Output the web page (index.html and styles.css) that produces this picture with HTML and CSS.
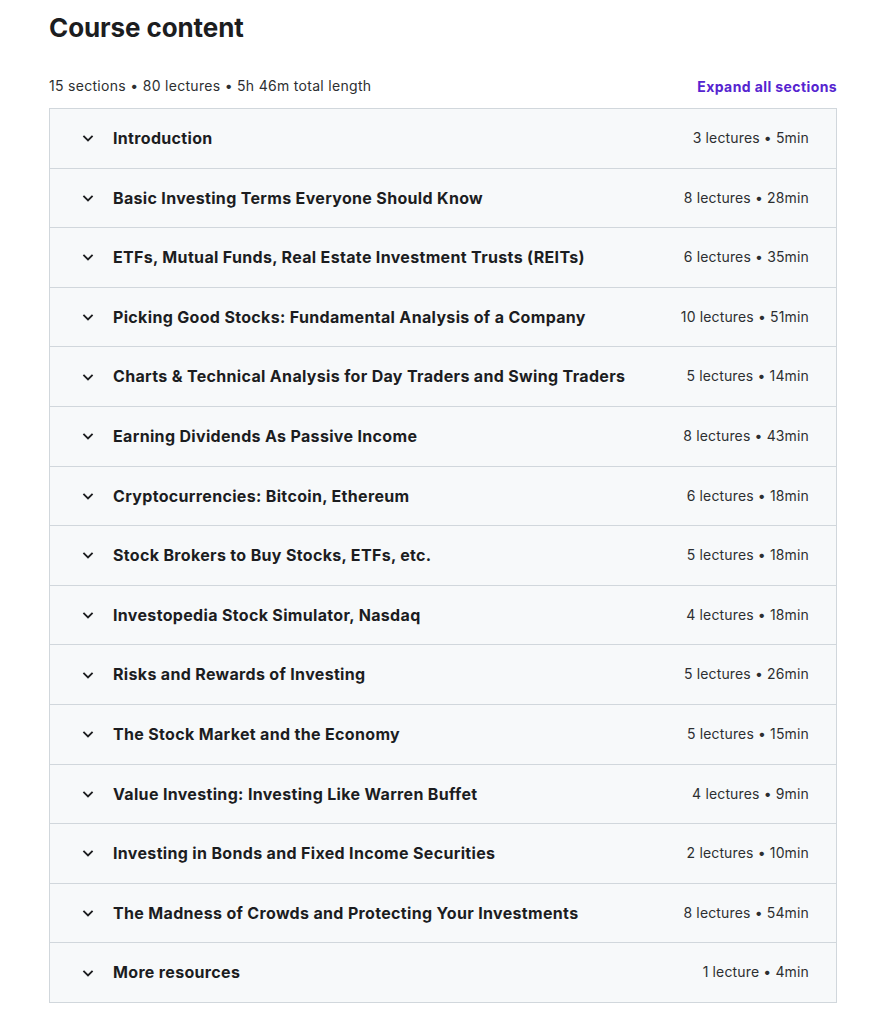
FILE: index.html
```html
<!DOCTYPE html>
<html lang="en">
<head>
    <meta charset="UTF-8">
    <meta name="viewport" content="width=device-width, initial-scale=1.0">
    <title>Course content</title>
    <link rel="stylesheet" href="styles.css">
</head>
<body>
    <div class="curriculum">
        <h2 class="titulo">Course content</h2>

        <div class="resumen">
            <span>15 sections • 80 lectures • 5h 46m total length</span>
            <button class="expandir">Expand all sections</button>
        </div>

        <div class="secciones">
            <div class="seccion">
                <span class="chevron"><svg viewBox="0 0 24 24"><path d="M6.5 9.5l5.5 5.5 5.5-5.5"/></svg></span>
                <span class="nombre">Introduction</span>
                <span class="datos">3 lectures • 5min</span>
            </div>
            <div class="seccion">
                <span class="chevron"><svg viewBox="0 0 24 24"><path d="M6.5 9.5l5.5 5.5 5.5-5.5"/></svg></span>
                <span class="nombre">Basic Investing Terms Everyone Should Know</span>
                <span class="datos">8 lectures • 28min</span>
            </div>
            <div class="seccion">
                <span class="chevron"><svg viewBox="0 0 24 24"><path d="M6.5 9.5l5.5 5.5 5.5-5.5"/></svg></span>
                <span class="nombre">ETFs, Mutual Funds, Real Estate Investment Trusts (REITs)</span>
                <span class="datos">6 lectures • 35min</span>
            </div>
            <div class="seccion">
                <span class="chevron"><svg viewBox="0 0 24 24"><path d="M6.5 9.5l5.5 5.5 5.5-5.5"/></svg></span>
                <span class="nombre">Picking Good Stocks: Fundamental Analysis of a Company</span>
                <span class="datos">10 lectures • 51min</span>
            </div>
            <div class="seccion">
                <span class="chevron"><svg viewBox="0 0 24 24"><path d="M6.5 9.5l5.5 5.5 5.5-5.5"/></svg></span>
                <span class="nombre">Charts &amp; Technical Analysis for Day Traders and Swing Traders</span>
                <span class="datos">5 lectures • 14min</span>
            </div>
            <div class="seccion">
                <span class="chevron"><svg viewBox="0 0 24 24"><path d="M6.5 9.5l5.5 5.5 5.5-5.5"/></svg></span>
                <span class="nombre">Earning Dividends As Passive Income</span>
                <span class="datos">8 lectures • 43min</span>
            </div>
            <div class="seccion">
                <span class="chevron"><svg viewBox="0 0 24 24"><path d="M6.5 9.5l5.5 5.5 5.5-5.5"/></svg></span>
                <span class="nombre">Cryptocurrencies: Bitcoin, Ethereum</span>
                <span class="datos">6 lectures • 18min</span>
            </div>
            <div class="seccion">
                <span class="chevron"><svg viewBox="0 0 24 24"><path d="M6.5 9.5l5.5 5.5 5.5-5.5"/></svg></span>
                <span class="nombre">Stock Brokers to Buy Stocks, ETFs, etc.</span>
                <span class="datos">5 lectures • 18min</span>
            </div>
            <div class="seccion">
                <span class="chevron"><svg viewBox="0 0 24 24"><path d="M6.5 9.5l5.5 5.5 5.5-5.5"/></svg></span>
                <span class="nombre">Investopedia Stock Simulator, Nasdaq</span>
                <span class="datos">4 lectures • 18min</span>
            </div>
            <div class="seccion">
                <span class="chevron"><svg viewBox="0 0 24 24"><path d="M6.5 9.5l5.5 5.5 5.5-5.5"/></svg></span>
                <span class="nombre">Risks and Rewards of Investing</span>
                <span class="datos">5 lectures • 26min</span>
            </div>
            <div class="seccion">
                <span class="chevron"><svg viewBox="0 0 24 24"><path d="M6.5 9.5l5.5 5.5 5.5-5.5"/></svg></span>
                <span class="nombre">The Stock Market and the Economy</span>
                <span class="datos">5 lectures • 15min</span>
            </div>
            <div class="seccion">
                <span class="chevron"><svg viewBox="0 0 24 24"><path d="M6.5 9.5l5.5 5.5 5.5-5.5"/></svg></span>
                <span class="nombre">Value Investing: Investing Like Warren Buffet</span>
                <span class="datos">4 lectures • 9min</span>
            </div>
            <div class="seccion">
                <span class="chevron"><svg viewBox="0 0 24 24"><path d="M6.5 9.5l5.5 5.5 5.5-5.5"/></svg></span>
                <span class="nombre">Investing in Bonds and Fixed Income Securities</span>
                <span class="datos">2 lectures • 10min</span>
            </div>
            <div class="seccion">
                <span class="chevron"><svg viewBox="0 0 24 24"><path d="M6.5 9.5l5.5 5.5 5.5-5.5"/></svg></span>
                <span class="nombre">The Madness of Crowds and Protecting Your Investments</span>
                <span class="datos">8 lectures • 54min</span>
            </div>
            <div class="seccion">
                <span class="chevron"><svg viewBox="0 0 24 24"><path d="M6.5 9.5l5.5 5.5 5.5-5.5"/></svg></span>
                <span class="nombre">More resources</span>
                <span class="datos">1 lecture • 4min</span>
            </div>
        </div>
    </div>
</body>
</html>
```

FILE: styles.css
```css
* {
    margin: 0;
    padding: 0;
    box-sizing: border-box;
}

body {
    background-color: #fff;
    color: #1c1d1f;
    font-family: "Inter", "Roboto", sans-serif;
}

.curriculum {
    width: 788px;
    margin-left: 49px;
    padding-top: 10px;
}

.titulo {
    font-size: 26px;
    font-weight: 700;
    line-height: 36px;
    letter-spacing: -0.1px;
}

.resumen {
    display: flex;
    justify-content: space-between;
    align-items: center;
    margin-top: 30px;
    margin-bottom: 12px;
    font-size: 14px;
    line-height: 20px;
    letter-spacing: 0.3px;
    color: #2d2f31;
}

.expandir {
    background: none;
    border: 0;
    color: #5624d0;
    font-family: inherit;
    font-size: 14px;
    font-weight: 700;
    letter-spacing: 0.4px;
    cursor: pointer;
}

.secciones {
    border: 1px solid #d1d7dc;
    border-bottom: 0;
}

.seccion {
    display: flex;
    align-items: center;
    background-color: #f7f9fa;
    border-bottom: 1px solid #d1d7dc;
    padding: 18px 27px 18px 28px;
    line-height: 22.6px;
}

.chevron {
    width: 20px;
    height: 20px;
    margin-right: 15px;
    display: flex;
}

.chevron svg {
    width: 20px;
    height: 20px;
    fill: none;
    stroke: #1c1d1f;
    stroke-width: 2.2;
}

.nombre {
    flex: 1;
    font-size: 16px;
    font-weight: 700;
    letter-spacing: 0.33px;
}

.datos {
    font-size: 14px;
    letter-spacing: 0.15px;
    color: #2d2f31;
}
```
